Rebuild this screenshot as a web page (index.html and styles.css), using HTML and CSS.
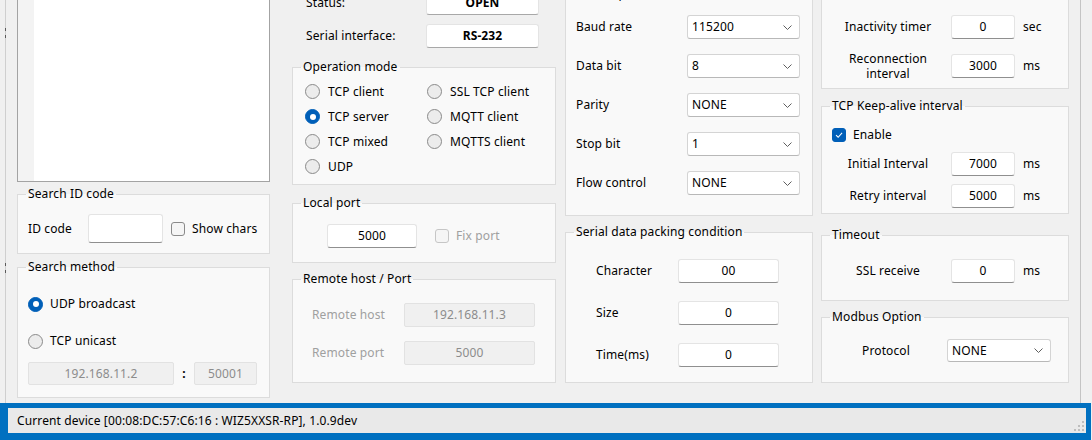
FILE: index.html
```html
<!DOCTYPE html>
<html>
<head>
<meta charset="utf-8">
<link rel="stylesheet" href="styles.css">
</head>
<body>
<div class="window">
  <div class="main">
    <div class="splitter"><span class="grip g1"></span><span class="grip g2"></span></div>

    <div class="col col1">
      <div class="listbox"><div class="rowhead"></div><div class="listbody"></div></div>
      <fieldset class="group g-idcode">
        <legend>Search ID code</legend>
        <div class="inner row">
          <span class="lbl w60">ID code</span>
          <div class="tb idtb"></div>
          <div class="chk"><span class="cbox"></span><span>Show chars</span></div>
        </div>
      </fieldset>
      <fieldset class="group g-method">
        <legend>Search method</legend>
        <div class="inner stack">
          <div class="radio on"><span class="rdot"></span><span>UDP broadcast</span></div>
          <div class="radio r2"><span class="rdot"></span><span>TCP unicast</span></div>
          <div class="iprow">
            <div class="tb dis ipbox">192.168.11.2</div>
            <span class="colon">:</span>
            <div class="tb dis portbox">50001</div>
          </div>
        </div>
      </fieldset>
    </div>

    <div class="col col2">
      <div class="srow first"><span class="lbl w120">Status:</span><div class="valbox">OPEN</div></div>
      <div class="srow second"><span class="lbl w120">Serial interface:</span><div class="valbox">RS-232</div></div>
      <fieldset class="group g-opmode">
        <legend>Operation mode</legend>
        <div class="inner opgrid">
          <div class="radio"><span class="rdot"></span><span>TCP client</span></div>
          <div class="radio"><span class="rdot"></span><span>SSL TCP client</span></div>
          <div class="radio on"><span class="rdot"></span><span>TCP server</span></div>
          <div class="radio"><span class="rdot"></span><span>MQTT client</span></div>
          <div class="radio"><span class="rdot"></span><span>TCP mixed</span></div>
          <div class="radio"><span class="rdot"></span><span>MQTTS client</span></div>
          <div class="radio"><span class="rdot"></span><span>UDP</span></div>
        </div>
      </fieldset>
      <fieldset class="group g-local">
        <legend>Local port</legend>
        <div class="inner row">
          <div class="tb localtb">5000</div>
          <div class="chk disabled fix"><span class="cbox"></span><span>Fix port</span></div>
        </div>
      </fieldset>
      <fieldset class="group g-remote">
        <legend>Remote host / Port</legend>
        <div class="inner stack gap14">
          <div class="row"><span class="lbl w92 grey">Remote host</span><div class="tb dis rbox">192.168.11.3</div></div>
          <div class="row"><span class="lbl w92 grey">Remote port</span><div class="tb dis rbox">5000</div></div>
        </div>
      </fieldset>
    </div>

    <div class="col col3">
      <fieldset class="group g-serial">
        <legend>Serial option</legend>
        <div class="inner stack gap15">
          <div class="row"><span class="lbl w111">Baud rate</span><div class="combo c113">115200<svg class="chev" width="9" height="5" viewBox="0 0 9 5"><path d="M0.5 0.5 L4.5 4.5 L8.5 0.5" fill="none" stroke="#5e5e5e"/></svg></div></div>
          <div class="row"><span class="lbl w111">Data bit</span><div class="combo c113">8<svg class="chev" width="9" height="5" viewBox="0 0 9 5"><path d="M0.5 0.5 L4.5 4.5 L8.5 0.5" fill="none" stroke="#5e5e5e"/></svg></div></div>
          <div class="row"><span class="lbl w111">Parity</span><div class="combo c113">NONE<svg class="chev" width="9" height="5" viewBox="0 0 9 5"><path d="M0.5 0.5 L4.5 4.5 L8.5 0.5" fill="none" stroke="#5e5e5e"/></svg></div></div>
          <div class="row"><span class="lbl w111">Stop bit</span><div class="combo c113">1<svg class="chev" width="9" height="5" viewBox="0 0 9 5"><path d="M0.5 0.5 L4.5 4.5 L8.5 0.5" fill="none" stroke="#5e5e5e"/></svg></div></div>
          <div class="row"><span class="lbl w111">Flow control</span><div class="combo c113">NONE<svg class="chev" width="9" height="5" viewBox="0 0 9 5"><path d="M0.5 0.5 L4.5 4.5 L8.5 0.5" fill="none" stroke="#5e5e5e"/></svg></div></div>
        </div>
      </fieldset>
      <fieldset class="group g-packing">
        <legend>Serial data packing condition</legend>
        <div class="inner stack gap18">
          <div class="row"><span class="lbl w82">Character</span><div class="tb pbox">00</div></div>
          <div class="row"><span class="lbl w82">Size</span><div class="tb pbox">0</div></div>
          <div class="row"><span class="lbl w82">Time(ms)</span><div class="tb pbox">0</div></div>
        </div>
      </fieldset>
    </div>

    <div class="col col4">
      <fieldset class="group g-timer">
        <legend>Timer option</legend>
        <div class="inner stack gap12">
          <div class="row"><span class="lblc w112">Inactivity timer</span><div class="tb nbox">0</div><span class="unit">sec</span></div>
          <div class="row"><span class="lblc w112 two">Reconnection<br>interval</span><div class="tb nbox">3000</div><span class="unit">ms</span></div>
        </div>
      </fieldset>
      <fieldset class="group g-keep">
        <legend>TCP Keep-alive interval</legend>
        <div class="inner stack">
          <div class="chk on enable"><span class="cbox"><svg width="14" height="14" viewBox="0 0 14 14"><path d="M3.5 7.2 L6 9.6 L10.6 4.6" fill="none" stroke="#fff" stroke-width="1.2"/></svg></span><span>Enable</span></div>
          <div class="row r-init"><span class="lblc w112">Initial Interval</span><div class="tb nbox">7000</div><span class="unit">ms</span></div>
          <div class="row r-retry"><span class="lblc w112">Retry interval</span><div class="tb nbox">5000</div><span class="unit">ms</span></div>
        </div>
      </fieldset>
      <fieldset class="group g-timeout">
        <legend>Timeout</legend>
        <div class="inner row">
          <span class="lblc w112">SSL receive</span><div class="tb nbox">0</div><span class="unit">ms</span>
        </div>
      </fieldset>
      <fieldset class="group g-modbus">
        <legend>Modbus Option</legend>
        <div class="inner row">
          <span class="lblc w108">Protocol</span>
          <div class="combo c104">NONE<svg class="chev" width="9" height="5" viewBox="0 0 9 5"><path d="M0.5 0.5 L4.5 4.5 L8.5 0.5" fill="none" stroke="#5e5e5e"/></svg></div>
        </div>
      </fieldset>
    </div>

    <div class="edge"></div>
  </div>

  <div class="statusbar">
    <span>Current device [00:08:DC:57:C6:16 : WIZ5XXSR-RP], 1.0.9dev</span>
    <svg class="sgrip" width="11" height="11" viewBox="0 0 11 11">
      <rect x="8" y="0" width="2" height="2" fill="#bdbdbd"/>
      <rect x="4" y="4" width="2" height="2" fill="#bdbdbd"/>
      <rect x="8" y="4" width="2" height="2" fill="#bdbdbd"/>
      <rect x="0" y="8" width="2" height="2" fill="#bdbdbd"/>
      <rect x="4" y="8" width="2" height="2" fill="#bdbdbd"/>
      <rect x="8" y="8" width="2" height="2" fill="#bdbdbd"/>
    </svg>
  </div>
</div>
</body>
</html>
```

FILE: styles.css
```css
* { box-sizing: border-box; }

html, body {
  margin: 0;
  padding: 0;
  background: #f0f0f0;
}

body {
  font-family: "Noto Sans", "Liberation Sans", sans-serif;
  font-size: 12px;
  line-height: 16px;
  letter-spacing: 0.12px;
  color: #000;
  width: 1092px;
  height: 440px;
  overflow: hidden;
}

.window {
  display: flex;
  flex-direction: column;
  height: 440px;
}

.main {
  display: flex;
  align-items: flex-start;
  height: 403px;
  overflow: hidden;
  flex-shrink: 0;
}

/* splitter at left */
.splitter {
  margin-left: 5px;
  width: 1px;
  height: 100%;
  background: #cfcfcf;
  flex-shrink: 0;
  display: flex;
  flex-direction: column;
}
.grip {
  display: block;
  width: 1px;
  height: 14px;
  background: repeating-linear-gradient(#5a5a5a 0 3px, transparent 3px 7px);
}
.g1 { margin-top: 28px; }
.g2 { margin-top: 221px; }

.col {
  display: flex;
  flex-direction: column;
  flex-shrink: 0;
}
.col1 { margin-left: 11px; width: 253px; }
.col2 { margin-left: 22px; width: 264px; }
.col3 { margin-left: 9px; width: 248px; }
.col4 { margin-left: 8px; width: 248px; }

.edge {
  margin-left: 11px;
  width: 1px;
  height: 100%;
  background: #c4c4c4;
  flex-shrink: 0;
}

/* list box */
.listbox {
  margin-top: -20px;
  height: 202px;
  border: 1px solid #a3a3a3;
  display: flex;
  background: #fff;
}
.rowhead { width: 16px; background: #f3f3f3; }
.listbody { flex: 1; background: #fff; }

/* group boxes */
fieldset {
  margin: 0;
  padding: 0;
  min-width: 0;
}
.group {
  border: 1px solid #dcdcdc;
  background: #f9f9f9;
}
.group legend {
  margin-left: 8px;
  padding: 0 2px;
  line-height: 16px;
  font-size: 12px;
}

.row {
  display: flex;
  align-items: center;
}
.stack {
  display: flex;
  flex-direction: column;
}
.gap12 { gap: 12px; }
.gap14 { gap: 14px; }
.gap15 { gap: 15px; }
.gap18 { gap: 18px; }

.lbl { flex-shrink: 0; white-space: nowrap; }
.lblc { flex-shrink: 0; text-align: center; white-space: nowrap; }
.w60 { width: 60px; }
.w82 { width: 82px; }
.w92 { width: 92px; }
.w108 { width: 108px; margin-right: 7px; }
.w111 { width: 111px; }
.w112 { width: 112px; margin-right: 7px; }
.w120 { width: 120px; }
.two { line-height: 15px; }
.grey { color: #a0a0a0; }
.unit { margin-left: 8px; }

/* text boxes */
.tb {
  background: #fff;
  border: 1px solid #e4e4e4;
  border-bottom-color: #8f8f8f;
  border-radius: 3px;
  display: flex;
  align-items: center;
  justify-content: center;
  flex-shrink: 0;
  height: 24px;
}
.tb.dis {
  background: #f0f0f0;
  border: 1px solid #e2e2e2;
  color: #8c8c8c;
  border-radius: 2px;
}
.idtb { width: 75px; height: 29px; }
.ipbox { width: 146px; height: 23px; }
.portbox { width: 63px; height: 23px; }
.colon { width: 20px; text-align: center; font-weight: bold; color: #000; }
.localtb { width: 90px; }
.rbox { width: 131px; }
.pbox { width: 101px; }
.nbox { width: 64px; }

.valbox {
  width: 113px;
  height: 24px;
  background: #fff;
  border: 1px solid #e4e4e4;
  border-bottom-color: #a8a8a8;
  border-radius: 3px;
  font-weight: bold;
  display: flex;
  align-items: center;
  justify-content: center;
}

/* combo boxes */
.combo {
  height: 24px;
  background: #fff;
  border: 1px solid #d4d4d4;
  border-bottom-color: #b8b8b8;
  border-radius: 3px;
  display: flex;
  align-items: center;
  padding-left: 4px;
  flex-shrink: 0;
}
.c113 { width: 113px; }
.c104 { width: 104px; height: 23px; }
.chev { margin-left: auto; margin-right: 7px; }

/* radio buttons */
.radio {
  display: flex;
  align-items: center;
  gap: 8px;
  height: 20px;
  white-space: nowrap;
}
.rdot {
  width: 15px;
  height: 15px;
  border-radius: 50%;
  border: 1px solid #8a8a8a;
  background: #ececec;
  flex-shrink: 0;
  display: flex;
  align-items: center;
  justify-content: center;
}
.radio.on .rdot {
  background: #005fb8;
  border-color: #005fb8;
}
.radio.on .rdot::after {
  content: "";
  width: 6px;
  height: 6px;
  border-radius: 50%;
  background: #fff;
}

/* check boxes */
.chk {
  display: flex;
  align-items: center;
  gap: 7px;
  white-space: nowrap;
}
.cbox {
  width: 14px;
  height: 14px;
  border: 1px solid #8a8a8a;
  border-radius: 3px;
  background: #f5f5f5;
  flex-shrink: 0;
  display: flex;
  align-items: center;
  justify-content: center;
}
.chk.on .cbox {
  background: #005fb8;
  border-color: #005fb8;
}
.chk.on .cbox svg { display: block; }
.chk.disabled { color: #a0a0a0; }
.chk.disabled .cbox { border-color: #c6c6c6; background: #f5f5f5; }

/* column 1 groups */
.g-idcode { margin-top: 4px; height: 68px; }
.g-idcode .inner { padding: 12px 0 0 10px; }
.g-idcode .chk { margin-left: 8px; }

.g-method { margin-top: 5px; height: 139px; }
.g-method .inner { padding: 19px 0 0 10px; }
.g-method .radio { gap: 7px; }
.g-method .r2 { margin-top: 17px; }
.iprow { display: flex; align-items: center; margin-top: 11px; }

/* column 2 */
.srow { display: flex; align-items: center; padding-left: 14px; }
.srow.first { margin-top: -9px; }
.srow.second { margin-top: 9px; }

.g-opmode { margin-top: 11px; height: 126px; }
.opgrid {
  display: grid;
  grid-template-columns: 122px auto;
  grid-auto-rows: 25px;
  align-items: center;
  padding: 4px 0 0 12px;
}

.g-local { margin-top: 10px; height: 68px; }
.g-local .inner { padding: 13px 0 0 34px; }
.g-local .fix { margin-left: 18px; }

.g-remote { margin-top: 8px; height: 112px; }
.g-remote .inner { padding: 16px 0 0 19px; }

/* column 3 */
.g-serial { margin-top: -14px; height: 230px; }
.g-serial .inner { padding: 13px 0 0 10px; }

.g-packing { margin-top: 8px; height: 159px; }
.g-packing .inner { padding: 19px 0 0 30px; }

/* column 4 */
.g-timer { margin-top: -30px; height: 119px; }
.g-timer .inner { padding: 29px 0 0 10px; }

.g-keep { margin-top: 9px; height: 116px; }
.g-keep .inner { padding: 11px 0 0 10px; }
.g-keep .enable { height: 20px; }
.g-keep .r-init { margin-top: 7px; }
.g-keep .r-retry { margin-top: 8px; }

.g-timeout { margin-top: 13px; height: 74px; }
.g-timeout .inner { padding: 16px 0 0 10px; }

.g-modbus { margin-top: 8px; height: 74px; }
.g-modbus .inner { padding: 14px 0 0 10px; }

/* status bar */
.statusbar {
  width: 1091px;
  height: 37px;
  border-style: solid;
  border-color: #0070c0;
  border-width: 5px 5px 7px 8px;
  background: #e9e9e9;
  display: flex;
  align-items: center;
  padding-left: 9px;
  flex-shrink: 0;
}
.sgrip {
  margin-left: auto;
  margin-right: 1px;
  align-self: flex-end;
  margin-bottom: 1px;
}
```
